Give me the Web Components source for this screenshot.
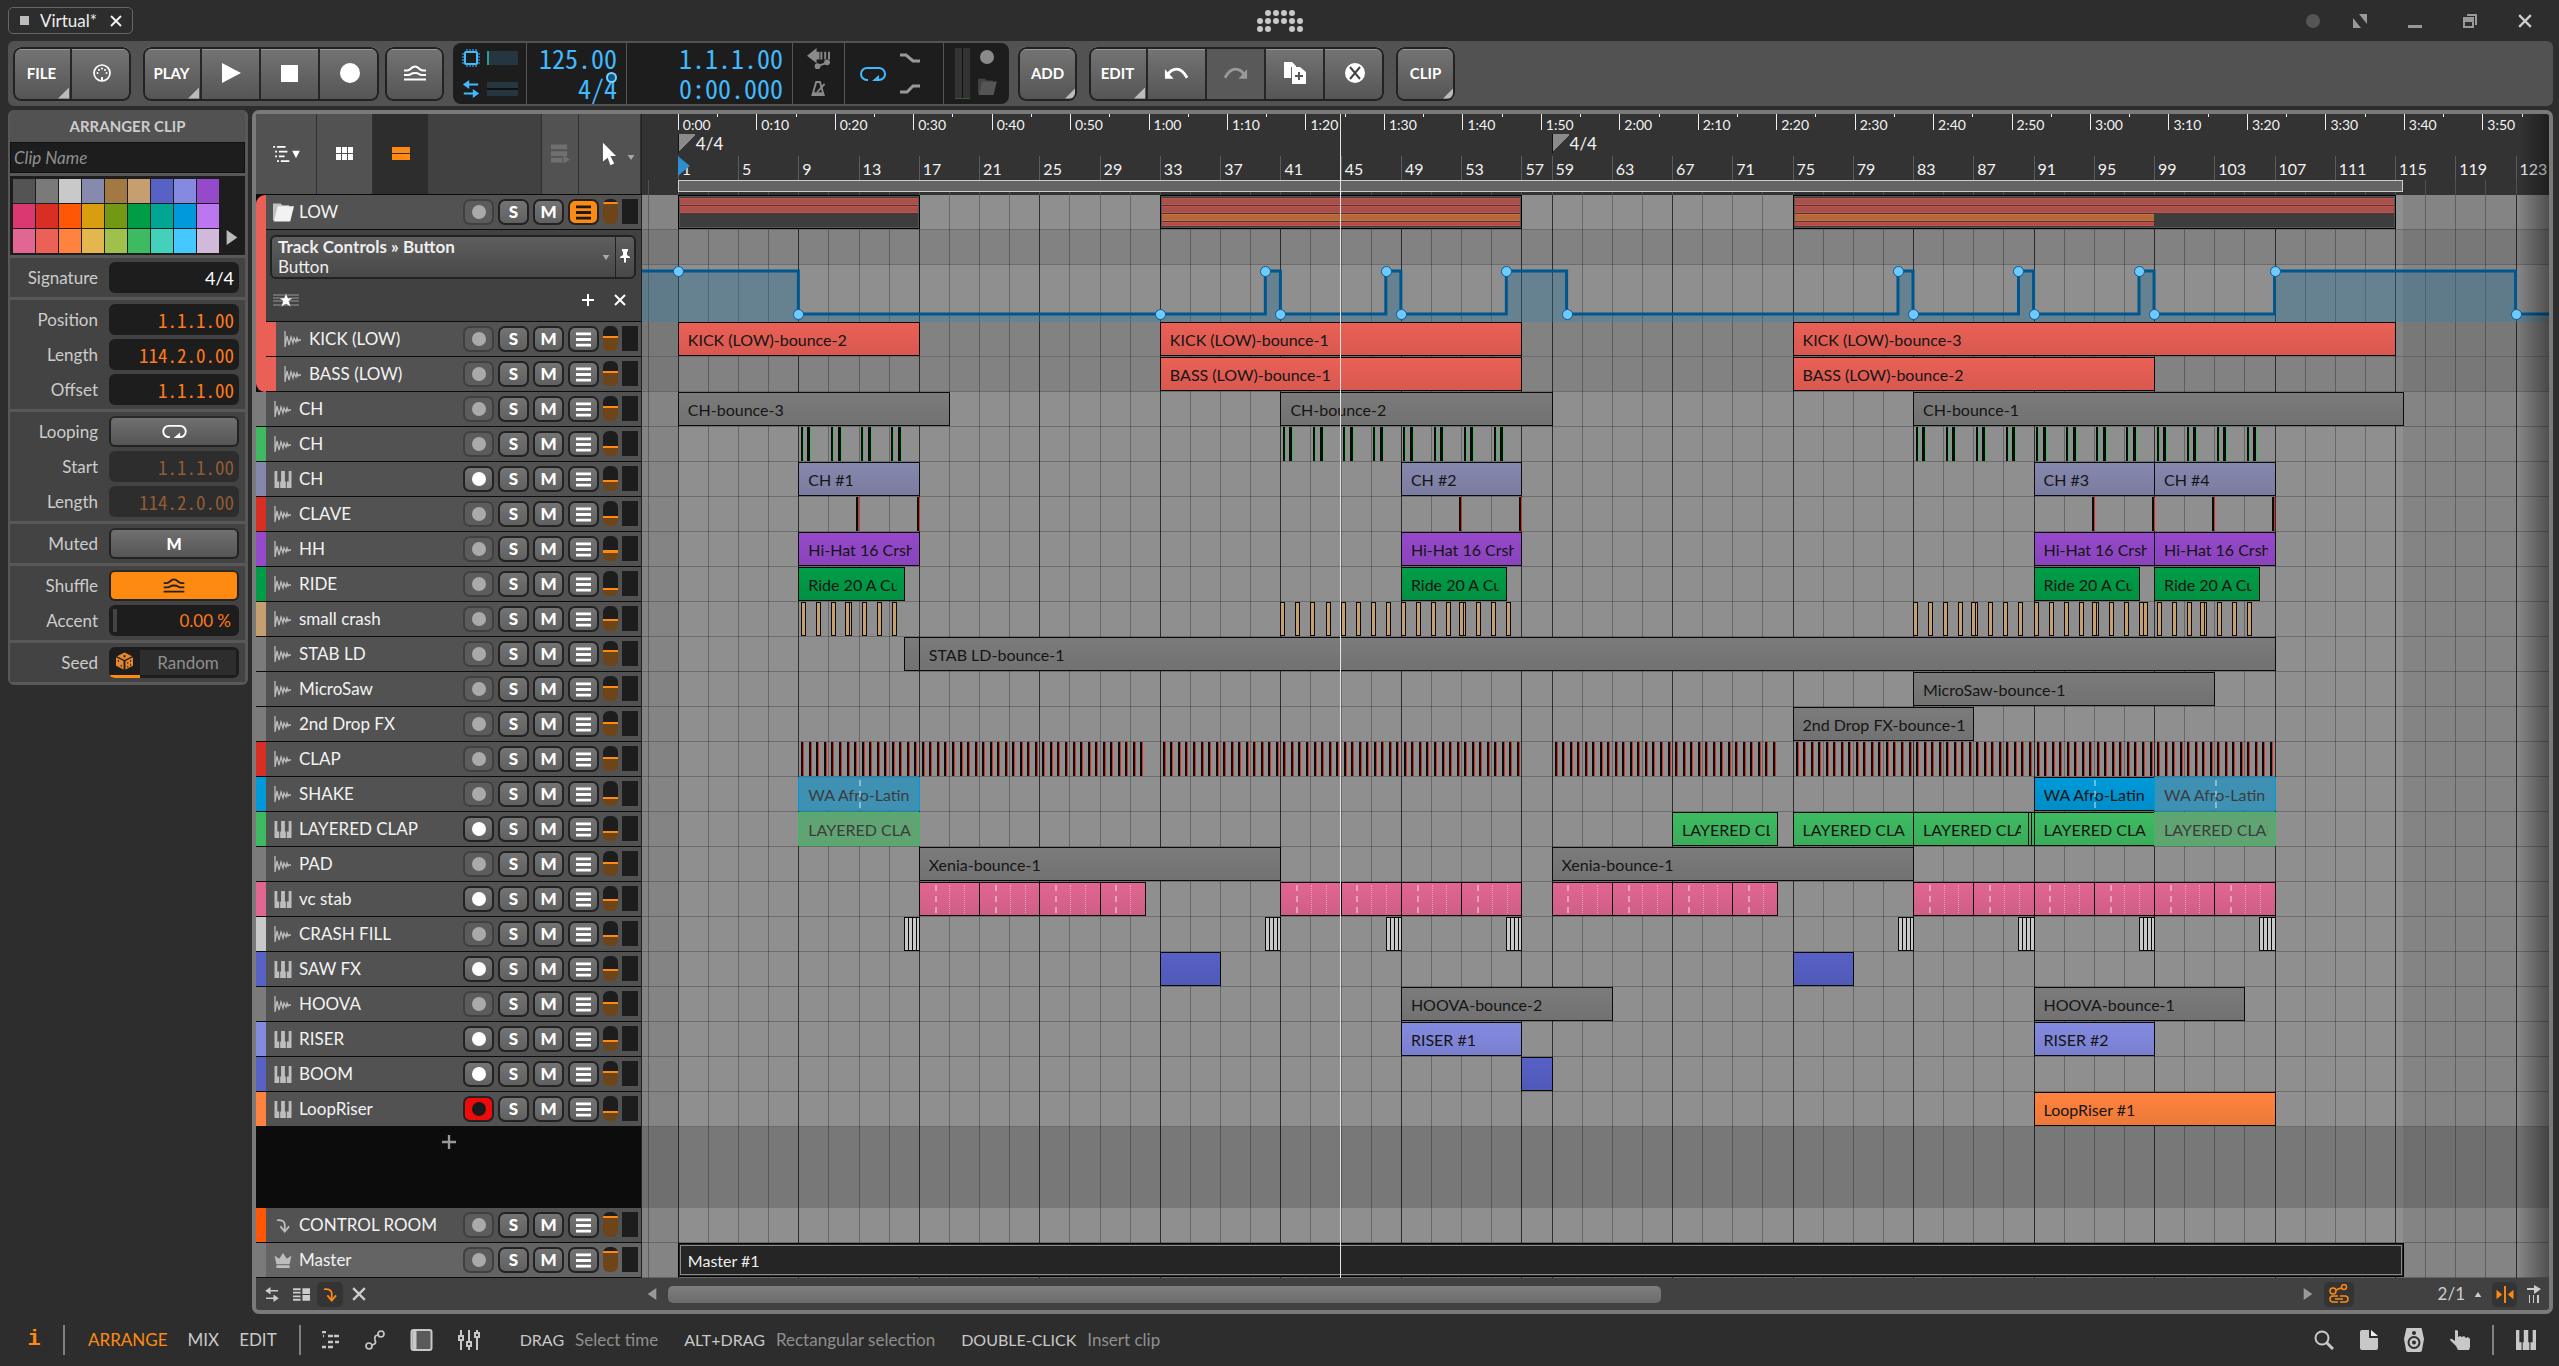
<!DOCTYPE html>
<html lang="en">
<head>
<meta charset="utf-8">
<title>Virtual* - Arranger</title>
<style>
  html, body {
    height: 100%;
  }

  body {
    margin: 0;
    background: #2d2d2d;
    color: #e6e6e6;
    font-family: Lato, "Liberation Sans", sans-serif;
    font-size: 17px;
    line-height: 20px;
    overflow: hidden;
    --mono: "Noto Sans Mono CJK JP", "DejaVu Sans Mono", "Liberation Mono", monospace;
    --orange: #ff8a12;
    --blue: #41baff;
  }
</style>
</head>
<body>
<daw-app></daw-app>

<script>
  const ICONS = {
    loop: ['0 0 26 16', '<path d="M8 14H7a6 6 0 0 1 0-12h12a6 6 0 0 1 0 12h-4" fill="none" stroke="currentColor" stroke-width="2"/><path d="M12 15l7-6v6z" fill="currentColor"/>'],
    midi: ['0 0 18 18', '<circle cx="9" cy="9" r="8" fill="none" stroke="currentColor" stroke-width="1.700"/><circle cx="4.500" cy="9" r="1" fill="currentColor"/><circle cx="6" cy="6" r="1" fill="currentColor"/><circle cx="9" cy="4.500" r="1" fill="currentColor"/><circle cx="12" cy="6" r="1" fill="currentColor"/><circle cx="13.500" cy="9" r="1" fill="currentColor"/><path d="M8 13h2v3H8z" fill="currentColor"/>'],
    play: ['0 0 20 20', '<path d="M1 0l19 10L1 20z" fill="currentColor"/>'],
    stop: ['0 0 18 18', '<path d="M0 0h18v18H0z" fill="currentColor"/>'],
    record: ['0 0 20 20', '<circle cx="10" cy="10" r="10" fill="currentColor"/>'],
    shuffle: ['0 0 24 16', '<path d="M1 14.500h22M1 10h4q2 0 3-1t4-1 4 1 3 1h4M1 5.500h3q2 0 4-2t4-2 4 2 4 2h3" fill="none" stroke="currentColor" stroke-width="2"/>'],
    undo: ['0 0 26 14', '<path d="M3 10Q7 3 13 3t11 9" fill="none" stroke="currentColor" stroke-width="3"/><path d="M1 3v10h9z" fill="currentColor"/>'],
    redo: ['0 0 26 14', '<path d="M23 10Q19 3 13 3T2 12" fill="none" stroke="currentColor" stroke-width="3"/><path d="M25 3v10h-9z" fill="currentColor"/>'],
    copy: ['0 0 22 22', '<path d="M0 0h8l4 4v1H7v11H0z" fill="currentColor"/><path d="M8 5h8l6 5v12H8z" fill="currentColor"/><path d="M15 10v8M11 14h8" stroke="#555" stroke-width="2"/>'],
    cancel: ['0 0 20 20', '<circle cx="10" cy="10" r="10" fill="currentColor"/><path d="M5 4l10 12M15 4L5 16" stroke="#444" stroke-width="2"/>'],
    chip: ['0 0 18 18', '<rect x="3" y="3" width="12" height="12" rx="1" fill="none" stroke="currentColor" stroke-width="2"/><path d="M5 0v3M8 0v3M11 0v3M14 0v3M5 15v3M8 15v3M11 15v3M14 15v3M0 5h3M0 8h3M0 11h3M0 14h3M15 5h3M15 8h3M15 11h3M15 14h3" stroke="currentColor"/>'],
    io: ['0 0 18 20', '<path d="M5 5h12M1 15h12" stroke="currentColor" stroke-width="2"/><path d="M0 5l7-5v10zM18 15l-7-5v10z" fill="currentColor"/>'],
    follow: ['0 0 24 22', '<path d="M0 8l10-8v4h3v8h-3v4zM14 4h2v8h-2zM18 4h2v8h-2zM22 4h2v8h-2z" fill="currentColor"/><path d="M11 19l11-4" stroke="currentColor" stroke-width="2"/><circle cx="11" cy="19" r="3" fill="currentColor"/><circle cx="21" cy="15" r="3" fill="currentColor"/>'],
    metronome: ['0 0 16 16', '<path d="M1 15L5 1h4l4 14z" fill="none" stroke="currentColor" stroke-width="2"/><path d="M1 12h12v4H1z" fill="currentColor"/><path d="M6 12l8-9" stroke="currentColor" stroke-width="2"/>'],
    fadeout: ['0 0 20 10', '<path d="M0 2h6l7 6h7" fill="none" stroke="currentColor" stroke-width="3"/>'],
    fadein: ['0 0 20 10', '<path d="M0 8h7l6-6h7" fill="none" stroke="currentColor" stroke-width="3"/>'],
    folder: ['0 0 22 20', '<path d="M0 19V1h8l2 2h7v2L4 19z" fill="currentColor" opacity=".700"/><path d="M5 4h17l-4 16H1z" fill="currentColor"/>'],
    wave: ['0 0 18 18', '<path d="M1 1v16l2-11 2 9 2-8 2 6 1-5 2 4 1-4 1 3 1-1h2" fill="none" stroke="currentColor" stroke-width="1.300"/>'],
    keys: ['0 0 18 18', '<path d="M0 0h3v11h2v7H0zM6 11h1V0h4v11h1v7H6zM15 0h3v18h-5v-7h2z" fill="currentColor"/>'],
    bend: ['0 0 16 16', '<path d="M1 2q9-1 9 5v6" fill="none" stroke="currentColor" stroke-width="2"/><path d="M5 9l5 6 5-6" fill="none" stroke="currentColor" stroke-width="2"/>'],
    crown: ['0 0 18 16', '<path d="M0 3l5 3 4-6 4 6 5-3-2 9H2zM2 13h14v3H2z" fill="currentColor"/>'],
    list: ['0 0 16 16', '<path d="M0 2h16M0 8h16M0 14h16" stroke="currentColor" stroke-width="3"/>'],
    outline: ['0 0 28 20', '<path d="M0 2h2M4 2h9M2 7h2M6 7h9M2 12h2M6 12h6M4 17h2M8 17h9" stroke="currentColor" stroke-width="2"/><path d="M20 6h8l-4 8z" fill="currentColor"/>'],
    grid: ['0 0 18 14', '<path d="M0 0h5v6H0zM6 0h5v6H6zM12 0h5v6h-5zM0 7h5v6H0zM6 7h5v6H6zM12 7h5v6h-5z" fill="currentColor"/>'],
    rows: ['0 0 18 14', '<path d="M0 0h18v6H0zM0 7h18v6H0z" fill="currentColor"/>'],
    lanes: ['0 0 20 20', '<path d="M0 0h17v5H0zM0 7h17v5H0zM0 14h12v5H0zM13 11l7 5-7 4z" fill="currentColor"/>'],
    cursor: ['0 0 16 24', '<path d="M1 0l14 14H9l4 8-4 2-3-8-5 4z" fill="currentColor"/>'],
    down: ['0 0 8 6', '<path d="M0 0h8L4 6z" fill="currentColor"/>'],
    up: ['0 0 8 6', '<path d="M0 6h8L4 0z" fill="currentColor"/>'],
    right: ['0 0 10 14', '<path d="M0 0l10 7-10 7z" fill="currentColor"/>'],
    left: ['0 0 10 14', '<path d="M10 0L0 7l10 7z" fill="currentColor"/>'],
    pin: ['0 0 10 14', '<path d="M2 0h6v2L7 3v3l3 2v1H6v4l-1 1-1-1V9H0V8l3-2V3L2 2z" fill="currentColor"/>'],
    star: ['0 0 26 14', '<path d="M0 2h26M0 5h26M0 8h26M0 12h26" stroke="#999"/><path d="M13 0l2 5h5l-4 3 2 6-5-3-5 3 2-6-4-3h5z" fill="currentColor" stroke="#414141" stroke-width=".500"/>'],
    plus: ['0 0 12 12', '<path d="M6 0v12M0 6h12" stroke="currentColor" stroke-width="2"/>'],
    close: ['0 0 12 12', '<path d="M1 1l10 10M11 1L1 11" stroke="currentColor" stroke-width="2"/>'],
    dice: ['0 0 18 18', '<path d="M9 0l8 4-8 4-8-4zM0 5l8 4v9l-8-4zM18 5l-8 4v9l8-4z" fill="currentColor"/><path d="M8 3h2v2H8zM2 8h1v2H2zM5 13h1v2H5zM12 10h1v2h-1zM15 8h1v2h-1zM12 14h1v2h-1zM15 12h1v2h-1z" fill="#1d1d1d"/>'],
    logo: ['0 0 46 22', [[1, 4], [0, 5], [0, 5]].map(([a, b], row) => {
      let dots = '';
      for (let col = a; col <= b; col++) {
        if (row === 2 && (col === 2 || col === 3)) continue;
        dots += `<circle cx="${3 + col * 8}" cy="${3 + row * 8}" r="3" fill="currentColor"/>`;
      }
      return dots;
    }).join('')],
    expand: ['0 0 14 14', '<path d="M0 4v10h8zM6 0h8v10z" fill="currentColor"/>'],
    minimize: ['0 0 14 14', '<path d="M0 11h14v3H0z" fill="currentColor"/>'],
    restore: ['0 0 14 14', '<path d="M4 0h10v11h-2V2H4z" fill="currentColor"/><path d="M0 3h11v11H0zM2 8v4h7V8z" fill="currentColor" fill-rule="evenodd"/>'],
    linked: ['0 0 20 20', '<circle cx="4" cy="7" r="3" fill="none" stroke="currentColor" stroke-width="1.500"/><circle cx="15" cy="3" r="2.500" fill="none" stroke="currentColor" stroke-width="1.500"/><path d="M7 6l5-2M9 18H4a3 3 0 0 1 0-6h5M11 12h5a3 3 0 0 1 0 6h-5M6 15h8" fill="none" stroke="currentColor" stroke-width="1.500"/>'],
    snap: ['0 0 18 18', '<path d="M9 0v18" stroke="currentColor" stroke-width="2"/><path d="M0 4l6 5-6 5zM18 4l-6 5 6 5z" fill="currentColor"/>'],
    step: ['0 0 14 18', '<path d="M0 4h8" stroke="currentColor" stroke-width="2"/><path d="M7 0l7 4-7 5zM10 10h2v8h-2zM6 10h1v8H6zM2 10h1v8H2z" fill="currentColor"/>'],
    rowset: ['0 0 18 13', '<path d="M0 1h8M0 4.500h8M0 8.500h8M0 12h8" stroke="currentColor" stroke-width="2"/><path d="M10 0h8v6h-8zM10 7h8v6h-8z" fill="currentColor"/>'],
    notes: ['0 0 18 18', '<path d="M0 1h4M0 16h4M6 16h5M6 5h5M12 5h5M6 11h5M13 11h4M1 5h1" stroke="currentColor" stroke-width="2.500"/>'],
    automation: ['0 0 20 20', '<circle cx="4" cy="16" r="3" fill="none" stroke="currentColor" stroke-width="1.700"/><circle cx="16" cy="4" r="3" fill="none" stroke="currentColor" stroke-width="1.700"/><path d="M7 15q5-1 3-5-1-5 3-5" fill="none" stroke="currentColor" stroke-width="1.700"/>'],
    panel: ['0 0 22 22', '<rect x="1" y="1" width="20" height="20" rx="2" fill="#5a5a5a" stroke="currentColor" stroke-width="2"/><path d="M2 2h4v18H2z" fill="currentColor"/>'],
    mixer: ['0 0 22 20', '<path d="M3 0v20M11 0v20M19 0v20" stroke="currentColor" stroke-width="2"/><g fill="#2d2d2d" stroke="currentColor" stroke-width="2"><rect x="1" y="6" width="4" height="4"/><rect x="9" y="12" width="4" height="4"/><rect x="17" y="3" width="4" height="4"/></g>'],
    search: ['0 0 20 20', '<circle cx="8" cy="8" r="6.500" fill="none" stroke="currentColor" stroke-width="2"/><path d="M12 12l7 7" stroke="currentColor" stroke-width="3"/>'],
    page: ['0 0 18 20', '<path d="M2 0h7v8h9v10a2 2 0 0 1-2 2H2a2 2 0 0 1-2-2V2a2 2 0 0 1 2-2z" fill="currentColor"/><path d="M11 0l7 6h-7z" fill="#eee"/>'],
    speaker: ['0 0 20 24', '<path d="M3 0h14q1 0 1 2l2 9-2 11q0 2-2 2H4q-2 0-2-2L0 11l2-9q0-2 1-2z" fill="currentColor"/><circle cx="10" cy="14.500" r="5.500" fill="none" stroke="#2d2d2d" stroke-width="2"/><circle cx="10" cy="14.500" r="2" fill="#2d2d2d"/><circle cx="10" cy="5" r="2" fill="#2d2d2d"/>'],
    hand: ['0 0 20 20', '<path d="M5 1q0-1 1-1t2 1v6l2-1 2 1 2-1 2 2 2-1 2 2v8l-1 3H8l-2-4-6-6q0-2 2-1l3 2z" fill="currentColor"/>']
  };

  // Bars are laid out as a share of the visible range so the timeline scales with the window.
  const LEAD_IN = 2.38;
  const VISIBLE_BARS = 126.6;
  const SONG_END = 115.5;
  const SECONDS_PER_BAR = 1.92;

  const span = (bars) => `${(bars / VISIBLE_BARS * 100).toFixed(3)}%`;
  const at = (bar) => span(bar - 1 + LEAD_IN);

  function range(from, to, step = 1) {
    const out = [];
    for (let v = from; v <= to + 0.001; v += step) out.push(v);
    return out;
  }

  const icon = (name, w, h) => `<daw-icon name="${name}" w="${w}" h="${h}"></daw-icon>`;

  class DawElement extends HTMLElement {
    constructor() {
      super();
      this.attachShadow({ mode: 'open' });
    }

    connectedCallback() {
      this.shadowRoot.innerHTML = `<style>${this.styles()}</style>${this.template()}`;
    }

    styles() {
      return ':host { display: block; }';
    }

    template() {
      return '<slot></slot>';
    }
  }

  class DawIcon extends DawElement {
    styles() {
      return ':host { display: inline-flex; flex: none; } svg { display: block; }';
    }

    template() {
      const [box, body] = ICONS[this.getAttribute('name')];
      return `<svg width="${this.getAttribute('w')}" height="${this.getAttribute('h')}" viewBox="${box}" aria-hidden="true">${body}</svg>`;
    }
  }

  class TitleBar extends DawElement {
    styles() {
      return `
        :host { display: grid; grid-template-columns: 1fr auto 1fr; align-items: center; height: 41px; color: #c8c8c8; }
        .tab { display: flex; align-items: center; gap: 11px; width: 125px; height: 27px; margin-left: 8px; box-sizing: border-box; padding-left: 11px; border: 1px solid #666; border-radius: 5px; color: #eee; }
        .tab i { width: 9px; height: 9px; background: #bbb; }
        .tab span { flex: 1; }
        button { border: 0; padding: 0; background: none; color: inherit; display: flex; }
        .tab button { margin-right: 10px; }
        .window { display: flex; justify-content: flex-end; align-items: center; gap: 41px; padding-right: 27px; color: #999; }
        .window .dim { color: #555; margin-right: -8px; }
        .window .x { color: #ccc; }
      `;
    }

    template() {
      return `
        <div class="tab"><i></i><span>Virtual*</span><button aria-label="Close project">${icon('close', 12, 12)}</button></div>
        ${icon('logo', 46, 22)}
        <div class="window">
          <button class="dim" aria-label="Status">${icon('record', 14, 14)}</button>
          <button aria-label="Full screen">${icon('expand', 14, 14)}</button>
          <button aria-label="Minimize">${icon('minimize', 14, 14)}</button>
          <button aria-label="Restore">${icon('restore', 14, 14)}</button>
          <button class="x" aria-label="Close">${icon('close', 14, 14)}</button>
        </div>
      `;
    }
  }

  class ToolGroup extends DawElement {
    styles() {
      return `
        :host { position: relative; display: flex; height: 54px; border-radius: 8px; overflow: hidden; }
        :host::after { content: ""; position: absolute; inset: 0; border: 2px solid #222; border-radius: 8px; pointer-events: none; }
        ::slotted(tool-button) { box-sizing: border-box; }
        ::slotted(tool-button:not(:last-child)) { border-right: 2px solid #262626; }
      `;
    }
  }

  class ToolButton extends DawElement {
    styles() {
      return `
        :host { display: block; width: 59px; }
        button { position: relative; display: flex; align-items: center; justify-content: center; width: 100%; height: 100%; border: 0; border-top: 3px solid #999; padding: 0 0 4px; background: linear-gradient(#737373, #545454); color: #fff; font: 700 15px/20px Lato, "Liberation Sans", sans-serif; }
        :host([off]) button { background: #595959; color: #999; border-top-color: #595959; }
        :host([menu]) button::after { content: ""; position: absolute; right: 1px; bottom: 2px; width: 11px; height: 11px; background: #bbb; clip-path: polygon(100% 0, 100% 100%, 0 100%); }
      `;
    }

    template() {
      return `<button ${this.hasAttribute('off') ? 'disabled' : ''} aria-label="${this.getAttribute('label') || this.textContent.trim()}"><slot></slot></button>`;
    }
  }

  class TransportDisplay extends DawElement {
    styles() {
      return `
        :host { display: grid; grid-template-columns: 74px 100px 166px 52px 99px 65px; width: 556px; height: 61px; background: #1d1d1d; border-radius: 8px; }
        section { display: grid; grid-template-rows: 1fr 1fr; align-items: center; border-right: 1px solid #555; box-sizing: border-box; }
        section:last-child { border: 0; }
        .stat { color: var(--blue); padding-left: 9px; }
        .stat div { display: flex; align-items: center; gap: 7px; }
        .load { width: 31px; height: 14px; background: #263640; border-left: 2px solid #2a9a9a; box-sizing: border-box; }
        .io { width: 31px; height: 14px; background: linear-gradient(#263640 6px, #111 6px, #111 8px, #263640 8px); }
        .num { color: var(--blue); font: 26px/26px var(--mono); text-align: right; padding: 0 9px 1px 0; }
        .sig { position: relative; }
        .sig i { position: absolute; right: 0; top: -3px; width: 7px; height: 7px; border: 2px solid #7ad0ff; border-radius: 50%; background: #0c5a8a; }
        .mid { justify-items: center; color: #8a8a8a; }
        .loop { grid-template-columns: 55px 1fr; color: #999; }
        .loop daw-icon:first-child { grid-row: 1 / 3; color: var(--blue); justify-self: center; }
        .meter { grid-template-columns: 23px 1fr; color: #8a8a8a; padding-left: 11px; }
        .meter div { grid-row: 1 / 3; height: 50px; width: 15px; background: linear-gradient(90deg, #333 7px, #111 7px, #111 8px, #333 8px); border-bottom: 1px solid #2f5f2f; }
        .meter .dot { margin-left: 2px; }
        .meter .dim { color: #555; }
      `;
    }

    template() {
      return `
        <section class="stat"><div>${icon('chip', 18, 18)}<span class="load"></span></div><div>${icon('io', 18, 18)}<span class="io"></span></div></section>
        <section class="num"><output>125.00</output><output class="sig">4/4<i></i></output></section>
        <section class="num"><output>1.1.1.00</output><output>0:00.000</output></section>
        <section class="mid">${icon('follow', 23, 21)}${icon('metronome', 16, 15)}</section>
        <section class="loop">${icon('loop', 26, 16)}${icon('fadeout', 20, 10)}${icon('fadein', 20, 10)}</section>
        <section class="meter"><div></div><span class="dot">${icon('record', 14, 14)}</span><span class="dim">${icon('folder', 19, 17)}</span></section>
      `;
    }
  }

  class TransportBar extends DawElement {
    styles() {
      return `
        :host { display: flex; align-items: center; height: 65px; margin: 0 6px 0 8px; padding-left: 5px; box-sizing: border-box; background: #525252; border-radius: 6px; }
        .a { margin-right: 12px; }
        .b { margin-right: 6px; }
        .c { margin-right: 9px; }
      `;
    }

    template() {
      return `
        <tool-group class="a"><tool-button menu>FILE</tool-button><tool-button label="Controllers">${icon('midi', 18, 18)}</tool-button></tool-group>
        <tool-group class="b"><tool-button menu>PLAY</tool-button><tool-button label="Play">${icon('play', 20, 20)}</tool-button><tool-button label="Stop">${icon('stop', 17, 17)}</tool-button><tool-button label="Record">${icon('record', 20, 20)}</tool-button></tool-group>
        <tool-group class="c"><tool-button label="Groove">${icon('shuffle', 24, 16)}</tool-button></tool-group>
        <transport-display class="c"></transport-display>
        <tool-group class="a"><tool-button menu>ADD</tool-button></tool-group>
        <tool-group class="a"><tool-button menu>EDIT</tool-button><tool-button label="Undo">${icon('undo', 25, 14)}</tool-button><tool-button off label="Redo">${icon('redo', 25, 14)}</tool-button><tool-button label="Duplicate">${icon('copy', 22, 22)}</tool-button><tool-button label="Delete">${icon('cancel', 20, 20)}</tool-button></tool-group>
        <tool-group><tool-button menu>CLIP</tool-button></tool-group>
      `;
    }
  }

  class InspectorField extends DawElement {
    styles() {
      return `
        :host { display: grid; grid-template-columns: 88px 130px; gap: 11px; align-items: center; height: 31px; }
        label { text-align: right; color: #ccc; }
        input, button { width: 130px; height: 31px; box-sizing: border-box; border: 0; border-radius: 6px; background: #1d1d1d; }
        input { padding: 0 5px; text-align: right; color: #fff; font: 18px/20px Lato, "Liberation Sans", sans-serif; }
        input.time { font: 19px/20px var(--mono); color: #ff7a1a; }
        input.accent { color: #ff7a1a; padding-right: 8px; font-size: 17px; background: linear-gradient(90deg, transparent 4px, #444 4px, #444 8px, transparent 8px) 0 50% / 100% 23px no-repeat #1d1d1d; }
        input:disabled { background: #2d2d2d; color: #8f5c35; }
        button { display: flex; align-items: center; justify-content: center; padding: 0; border: 2px solid #222; border-top-color: #2a2a2a; background: linear-gradient(#707070, #555); color: #fff; font: 900 16px/20px Lato, "Liberation Sans", sans-serif; }
        button.on { background: var(--orange); color: #222; }
        .seed { display: flex; width: 130px; height: 31px; border-radius: 6px; background: #1d1d1d; overflow: hidden; }
        .seed button { width: 31px; border: 0; border-bottom: 3px solid var(--orange); border-radius: 0; background: none; color: #e8862b; }
        .seed input { width: 96px; height: 25px; margin-top: 3px; border-radius: 0; background: #2d2d2d; color: #8f8f8f; text-align: center; font-size: 17px; }
      `;
    }

    template() {
      const type = this.getAttribute('type');
      const value = this.getAttribute('value');
      const label = this.getAttribute('label');
      let control = `<input id="f" class="${type || ''}" value="${value}" ${this.hasAttribute('off') ? 'disabled' : ''}>`;
      if (type === 'button') {
        control = `<button id="f" class="${this.hasAttribute('on') ? 'on' : ''}" aria-label="${label}"><slot></slot></button>`;
      } else if (type === 'seed') {
        control = `<div class="seed"><button aria-label="Randomize">${icon('dice', 17, 18)}</button><input id="f" value="${value}"></div>`;
      }
      return `<label for="f">${label}</label>${control}`;
    }
  }

  class ClipInspector extends DawElement {
    styles() {
      const colors = [
        '#545454', '#7a7a7a', '#c9c9c9', '#868aad', '#a37943', '#c69f70', '#5761c6', '#848ae0', '#9549cb',
        '#d93871', '#d92e24', '#ff5706', '#d99d10', '#739914', '#009d47', '#00a694', '#0099d9', '#bc76f0',
        '#e16691', '#ec6157', '#ff833e', '#e4b74e', '#a0c04c', '#3ebb62', '#43d2b9', '#44c8ff', '#d0b9da'
      ];
      return `
        :host { display: flex; flex-direction: column; gap: 3px; align-self: start; width: 240px; box-sizing: border-box; padding: 0 3px 3px 2px; background: #585858; border-radius: 6px; overflow: hidden; }
        h2 { margin: 0 0 -3px; height: 32px; font: 700 15px/33px Lato, "Liberation Sans", sans-serif; color: #ccc; text-align: center; background: #525252; }
        .name { height: 31px; box-sizing: border-box; border: 1px solid #111; padding: 0 3px; background: #1d1d1d; color: #ddd; font: italic 17px/20px Lato, "Liberation Sans", sans-serif; }
        .name::placeholder { color: #8f8f8f; opacity: 1; }
        .palette { display: flex; align-items: end; background: #1d1d1d; padding: 3px 3px 2px; }
        .swatches { display: grid; grid-template-columns: repeat(9, 22px); gap: 1px; }
        .swatches button { height: 24px; border: 0; padding: 0; }
        .more { border: 0; padding: 0; margin: 0 0 5px 7px; background: none; color: #bbb; }
        .group { display: flex; flex-direction: column; gap: 4px; padding: 4px 0; background: #434343; }
        ${colors.map((c, i) => `.swatches button:nth-child(${i + 1}) { background: ${c}; }`).join('')}
      `;
    }

    template() {
      return `
        <h2>ARRANGER CLIP</h2>
        <input class="name" placeholder="Clip Name" aria-label="Clip name">
        <div class="palette">
          <div class="swatches">${range(1, 27).map((i) => `<button aria-label="Color ${i}"></button>`).join('')}</div>
          <button class="more" aria-label="More colors">${icon('right', 12, 15)}</button>
        </div>
        <div class="group"><inspector-field label="Signature" value="4/4"></inspector-field></div>
        <div class="group">
          <inspector-field label="Position" type="time" value="1.1.1.00"></inspector-field>
          <inspector-field label="Length" type="time" value="114.2.0.00"></inspector-field>
          <inspector-field label="Offset" type="time" value="1.1.1.00"></inspector-field>
        </div>
        <div class="group">
          <inspector-field label="Looping" type="button">${icon('loop', 25, 15)}</inspector-field>
          <inspector-field label="Start" type="time" value="1.1.1.00" off></inspector-field>
          <inspector-field label="Length" type="time" value="114.2.0.00" off></inspector-field>
        </div>
        <div class="group"><inspector-field label="Muted" type="button">M</inspector-field></div>
        <div class="group">
          <inspector-field label="Shuffle" type="button" on>${icon('shuffle', 24, 15)}</inspector-field>
          <inspector-field label="Accent" type="accent" value="0.00 %"></inspector-field>
        </div>
        <div class="group"><inspector-field label="Seed" type="seed" value="Random"></inspector-field></div>
      `;
    }
  }

  class TrackHeader extends DawElement {
    styles() {
      return `
        :host { display: flex; height: 35px; box-sizing: border-box; border-bottom: 1px solid #0c0c0c; background: #525252; }
        .strip { width: 10px; background: ${this.getAttribute('color')}; }
        .type { display: flex; align-items: center; justify-content: center; width: 18px; margin: 0 7px 0 8px; color: #bdbdbd; }
        .type.folder { color: #f2f2f2; }
        .name { flex: 1; color: #f2f2f2; line-height: 34px; white-space: nowrap; }
        .tools { display: flex; gap: 4px; padding: 4px 3px 0 0; }
        .tools button { display: flex; align-items: center; justify-content: center; width: 31px; height: 26px; padding: 0; border: 2px solid #222; border-radius: 7px; background: linear-gradient(#747474, #606060); color: #fff; font: 900 17px/20px Lato, "Liberation Sans", sans-serif; }
        .tools button.idle { border-color: #404040; background: #5c5c5c; color: #aaa; }
        .tools button.armed { background: #f00a0a; color: #1a1a1a; }
        .tools button.lit { background: var(--orange); color: #1a1a1a; }
        input { appearance: none; width: 15px; height: 25px; margin: 0; border-radius: 6px; background: linear-gradient(#1d1d1d calc(var(--vol) - 2px), var(--orange) calc(var(--vol) - 2px), var(--orange) var(--vol), #6e4518 var(--vol)); }
        input::-webkit-slider-thumb { appearance: none; width: 0; height: 0; }
        .meter { width: 16px; height: 25px; background: #1d1d1d; }
        :host([main]) { background: #646464; }
      `;
    }

    template() {
      const type = this.getAttribute('type');
      const rec = this.getAttribute('rec') || 'idle';
      const name = this.getAttribute('name');
      const vol = this.getAttribute('vol');
      const size = { folder: [21, 20], wave: [18, 18], keys: [18, 17], bend: [14, 15], crown: [18, 15] }[type];
      return `
        ${this.hasAttribute('color') ? '<div class="strip"></div>' : ''}
        <div class="type ${type}">${icon(type, ...size)}</div>
        <div class="name">${name}</div>
        <div class="tools">
          <button class="${rec}" aria-label="Record arm ${name}">${icon('record', 14, 14)}</button>
          <button>S</button>
          <button>M</button>
          <button class="${this.hasAttribute('lit') ? 'lit' : ''}" aria-label="Automation ${name}">${icon('list', 15, 15)}</button>
          <input type="range" min="0" max="100" value="${100 - vol}" aria-label="Volume ${name}" style="--vol: ${vol}%">
          <div class="meter"></div>
        </div>
      `;
    }
  }

  class AutomationHeader extends DawElement {
    styles() {
      return `
        :host { display: flex; flex-direction: column; justify-content: space-between; height: 92px; box-sizing: border-box; padding: 5px 5px 11px 4px; border-bottom: 1px solid #0c0c0c; background: #414141; color: #fff; }
        .pick { display: flex; height: 44px; box-sizing: border-box; border: 2px solid #222; border-radius: 6px; background: linear-gradient(#5e5e5e, #484848); overflow: hidden; }
        button { border: 0; padding: 0; background: none; color: inherit; font: inherit; }
        .param { flex: 1; display: flex; align-items: center; padding: 0 5px 0 6px; text-align: left; color: #eee; }
        .param span { flex: 1; font-size: 17px; line-height: 20px; }
        .param b { display: block; }
        .param daw-icon { color: #aaa; }
        .pin { width: 19px; border-left: 1px solid #222; }
        .row { display: flex; align-items: center; padding: 0 10px 0 3px; }
        .row button:first-of-type { margin-left: auto; margin-right: 20px; }
      `;
    }

    template() {
      return `
        <div class="pick">
          <button class="param"><span><b>Track Controls » Button</b>Button</span>${icon('down', 8, 5)}</button>
          <button class="pin" aria-label="Pin lane">${icon('pin', 10, 14)}</button>
        </div>
        <div class="row">${icon('star', 26, 14)}<button aria-label="Add lane">${icon('plus', 12, 12)}</button><button aria-label="Remove lane">${icon('close', 12, 12)}</button></div>
      `;
    }
  }

  class TrackGroup extends DawElement {
    styles() {
      return `
        :host { display: grid; grid-template-columns: 10px 1fr; background: #0c0c0c; }
        .strip { background: #ea6056; border-radius: 9px 0 0 9px; }
      `;
    }

    template() {
      return '<div class="strip"></div><div><slot></slot></div>';
    }
  }

  class TimeRuler extends DawElement {
    styles() {
      return `
        :host { display: grid; grid-template-rows: 20px 20px 26px 15px; height: 81px; background: #333; color: #f2f2f2; overflow: hidden; }
        .row { position: relative; }
        .row > * { position: absolute; top: 0; }
        .sec { height: 16px; border-left: 1px solid #eee; padding-left: 4px; font-size: 14px; line-height: 22px; }
        .half { height: 3px; width: 1px; background: #eee; }
        .sig { font-size: 17px; line-height: 20px; padding-left: 18px; }
        .sig::before { content: ""; position: absolute; left: 0; top: 0; width: 17px; height: 19px; background: linear-gradient(135deg, #8a8a8a 50%, transparent 50%); border-left: 1px solid #111; box-sizing: border-box; }
        .bar { height: 26px; border-left: 1px solid #5c5c5c; padding-left: 3px; font-size: 16px; line-height: 26px; top: 2px; }
        .start { top: 2px; width: 12px; height: 20px; background: #2e8fd0; clip-path: polygon(0 0, 100% 50%, 0 100%); }
        .minor { width: 1px; height: 15px; background: #505050; }
        .region { height: 12px; box-sizing: border-box; border: 1px solid #ccc; background: #646464; }
      `;
    }

    template() {
      const seconds = range(0, 230, 10).map((s) => {
        const text = `${Math.floor(s / 60)}:${String(s % 60).padStart(2, '0')}`;
        return `<span class="sec" style="left: ${at(1 + s / SECONDS_PER_BAR)}">${text}</span><i class="half" style="left: ${at(1 + (s + 5) / SECONDS_PER_BAR)}"></i>`;
      });
      const bars = [...range(1, 57, 4), ...range(59, 123, 4)];
      return `
        <div class="row">${seconds.join('')}</div>
        <div class="row">${[1, 59].map((b) => `<span class="sig" style="left: ${at(b)}">4/4</span>`).join('')}</div>
        <div class="row">${bars.map((b) => `<span class="bar" style="left: ${at(b)}">${b}</span>`).join('')}<i class="start" style="left: ${at(1)}"></i></div>
        <div class="row">${range(-1, 123, 2).map((b) => `<i class="minor" style="left: ${at(b)}"></i>`).join('')}<div class="region" style="left: ${at(1)}; width: ${span(SONG_END - 1)}"></div></div>
      `;
    }
  }

  class ArrangerClip extends DawElement {
    styles() {
      return `
        :host { position: absolute; z-index: 2; top: 0; height: 34px; box-sizing: border-box; border: 1px solid #0a0a0a; background: linear-gradient(transparent, rgba(0, 0, 0, .08)) var(--color); color: #151515; font-size: 16px; }
        .label { height: 32px; box-sizing: border-box; padding-top: 4px; margin: 0 7px 0 9px; line-height: 26px; overflow: hidden; white-space: nowrap; }
        :host([muted]) { border-color: var(--color); background: color-mix(in srgb, var(--color) 54%, #888); color: #3c3c3c; }
        :host([master]) { border: 1px solid #000; outline: 1px solid #8a8a8a; outline-offset: -3px; background: #252525; color: #eee; }
        :host([folder]) { border: 1px solid #000; outline: 1px solid #555; outline-offset: -2px; background: #3d3d3d; padding-top: 2px; }
        .part { height: 7px; margin: 0 1px 1px; box-sizing: border-box; border: solid #cc5048; border-width: 1px 0; background: #a8504b; }
        .part.alt { border-color: #cf6e38; background: #b3693c; }
        .part.low { height: 4px; }
        .part.short { margin-right: 40%; }
        .mark { position: absolute; top: 2px; bottom: 2px; border-left: 2px dashed rgba(255, 255, 255, .4); }
        .mark.dot { border-left: 1px dotted rgba(255, 255, 255, .4); }
        :host([stripes]) { background: repeating-linear-gradient(90deg, #c9c9c9 0 3px, #0a0a0a 3px 4px); }
      `;
    }

    template() {
      if (this.hasAttribute('folder')) {
        const parts = this.getAttribute('folder');
        const cut = parts === 'short' ? 'short' : '';
        return `<div class="part"></div><div class="part"></div>${parts === 'half' ? '' : `<div class="part alt ${cut}"></div><div class="part low ${cut}"></div>`}`;
      }
      const marks = (this.getAttribute('marks') || '').split(' ').filter(Boolean)
        .map((m, i) => `<i class="mark ${i ? 'dot' : ''}" style="left: ${m}%"></i>`).join('');
      return marks + `<div class="label"><slot></slot></div>`;
    }
  }

  class ArrangerLane extends DawElement {
    styles() {
      return `
        :host { display: block; position: relative; height: 35px; box-sizing: border-box; border-bottom: 1px solid #6d6d6d; background: #8f8f8f; }
        :host([dark]) { background: #828282; }
        .hit { position: absolute; z-index: 2; top: 0; height: 34px; width: 3px; box-sizing: border-box; border-left: 2px solid #0a0a0a; background: var(--color); }
        .hit.wide { width: 4px; border-left-width: 3px; }
        .hit.box { width: 5px; border: 1px solid #0a0a0a; }
      `;
    }

    template() {
      const track = this.track;
      const clips = (track.clips || []).map(([from, to, label = '', extra = '']) =>
        `<arranger-clip ${extra} style="left: ${at(from)}; width: calc(${span(to - from)} + 1px); --color: ${track.color}">${label}</arranger-clip>`);
      const hits = (track.hits || []).map(([bar, kind = '']) =>
        `<i class="hit ${kind}" style="left: ${at(bar)}; --color: ${track.color}"></i>`);
      return clips.join('') + hits.join('');
    }
  }

  class AutomationLane extends DawElement {
    styles() {
      return `
        :host { display: block; height: 92px; }
        .gap { height: 34px; border-bottom: 1px solid #6d6d6d; background: #828282; }
        .curve { position: relative; height: 57px; background: #8f8f8f; }
        svg { position: absolute; z-index: 2; width: 100%; height: 100%; }
        .point { position: absolute; z-index: 3; width: 9px; height: 9px; margin: -5px 0 0 -5px; border: 1px solid #0a5a94; border-radius: 50%; background: #6fcaff; }
      `;
    }

    template() {
      const hi = 6;
      const lo = 49;
      const points = [[1, hi], [9, lo], [33, lo], [40, hi], [41, lo], [48, hi], [49, lo], [56, hi], [60, lo], [82, hi], [83, lo], [90, hi], [91, lo], [98, hi], [99, lo], [107, hi], [123, lo]];
      let path = `M0 ${hi}`;
      points.forEach(([bar, y]) => {
        path += `H${bar - 1 + LEAD_IN}V${y}`;
      });
      path += `H${VISIBLE_BARS}`;
      return `
        <div class="gap"></div>
        <div class="curve">
          <svg viewBox="0 0 ${VISIBLE_BARS} 57" preserveAspectRatio="none">
            <path d="${path}V57H0z" fill="rgba(40, 110, 145, .4)"/>
            <path d="${path}" fill="none" stroke="#00568f" stroke-width="3" vector-effect="non-scaling-stroke"/>
          </svg>
          ${points.map(([bar, y]) => `<i class="point" style="left: ${at(bar)}; top: ${y}px"></i>`).join('')}
        </div>
      `;
    }
  }

  const RED = '#ea6056';
  const GREY = '#7b7b7b';
  const four = [[9, 17], [49, 57], [91, 99], [99, 107]];
  const pairs = (from, to) => range(from, to, 2).flatMap((b) => [[b + 0.17], [b + 0.6, 'wide']]);
  const ticks = (from, to, kind) => range(from, to, kind ? 1 : 0.5).map((b) => [b, kind]);
  const stabs = (from, to) => range(from, to - 1, 4).map((b) => {
    const len = Math.min(4, to - b);
    return [b, b + len, '', `marks="${100 / len} ${200 / len} ${len > 3 ? 75 : ''}"`];
  });

  const TRACKS = [
    { name: 'CH', type: 'wave', color: GREY, vol: 50, clips: [[1, 19, 'CH-bounce-3'], [41, 59, 'CH-bounce-2'], [83, 115.5, 'CH-bounce-1']] },
    { name: 'CH', type: 'wave', color: '#3ebb62', vol: 68, hits: [...pairs(9, 15), ...pairs(41, 55), ...pairs(83, 105)] },
    { name: 'CH', type: 'keys', color: '#8587ad', vol: 66, rec: 'ready', clips: four.map(([a, b], i) => [a, b, `CH #${i + 1}`]) },
    { name: 'CLAVE', type: 'wave', color: '#d92e24', vol: 70, hits: [12.85, 16.85, 52.85, 56.85, 94.85, 98.85, 102.85, 106.85].map((b) => [b]) },
    { name: 'HH', type: 'wave', color: '#9549cb', vol: 66, clips: four.map(([a, b]) => [a, b, 'Hi-Hat 16 Crsh']) },
    { name: 'RIDE', type: 'wave', color: '#009d47', vol: 74, clips: four.map(([a, b]) => [a, b - 1, 'Ride 20 A Cu']) },
    { name: 'small crash', type: 'wave', color: '#c69f70', vol: 60, hits: [...ticks(9.2, 15.2, 'box'), [12.1, 'box'], ...ticks(41, 56, 'box'), [52.85, 'box'], ...ticks(83, 98, 'box'), [86.85, 'box'], [94.85, 'box'], [98.25, 'box'], ...ticks(99.2, 105.2, 'box'), [102.05, 'box']] },
    { name: 'STAB LD', type: 'wave', color: GREY, vol: 46, clips: [[16, 17], [17, 107, 'STAB LD-bounce-1']] },
    { name: 'MicroSaw', type: 'wave', color: GREY, vol: 50, clips: [[83, 103, 'MicroSaw-bounce-1']] },
    { name: '2nd Drop FX', type: 'wave', color: GREY, vol: 50, clips: [[75, 87, '2nd Drop FX-bounce-1']] },
    { name: 'CLAP', type: 'wave', color: '#d92e24', vol: 54, hits: [...ticks(9.2, 31.7), ...ticks(33.2, 56.7), ...ticks(59.2, 73.7), ...ticks(75.2, 106.7)] },
    { name: 'SHAKE', type: 'wave', color: '#0099d9', vol: 72, clips: [[9, 17, 'WA Afro-Latin', 'muted marks="50"'], [91, 99, 'WA Afro-Latin', 'marks="50"'], [99, 107, 'WA Afro-Latin', 'muted marks="50"']] },
    { name: 'LAYERED CLAP', type: 'keys', color: '#3ebb62', vol: 68, rec: 'ready', clips: [[9, 17, 'LAYERED CLAP', 'muted'], [67, 74, 'LAYERED CLAP'], [75, 83, 'LAYERED CLAP'], [83, 90.6, 'LAYERED CLAP'], [90.6, 90.8], [90.8, 91], [91, 99, 'LAYERED CLAP'], [99, 107, 'LAYERED CLAP', 'muted']] },
    { name: 'PAD', type: 'wave', color: GREY, vol: 50, clips: [[17, 41, 'Xenia-bounce-1'], [59, 83, 'Xenia-bounce-1']] },
    { name: 'vc stab', type: 'keys', color: '#e16691', vol: 60, rec: 'ready', clips: [...stabs(17, 32), ...stabs(41, 57), ...stabs(59, 74), ...stabs(83, 107)] },
    { name: 'CRASH FILL', type: 'wave', color: '#c9c9c9', vol: 64, clips: [16, 40, 48, 56, 82, 90, 98, 106].map((b) => [b, b + 1, '', 'stripes']) },
    { name: 'SAW FX', type: 'keys', color: '#5761c6', vol: 62, rec: 'ready', clips: [[33, 37], [75, 79]] },
    { name: 'HOOVA', type: 'wave', color: GREY, vol: 50, clips: [[49, 63, 'HOOVA-bounce-2'], [91, 105, 'HOOVA-bounce-1']] },
    { name: 'RISER', type: 'keys', color: '#848ae0', vol: 64, rec: 'ready', clips: [[49, 57, 'RISER #1'], [91, 99, 'RISER #2']] },
    { name: 'BOOM', type: 'keys', color: '#5761c6', vol: 50, rec: 'ready', clips: [[57, 59]] },
    { name: 'LoopRiser', type: 'keys', color: '#ff833e', vol: 68, rec: 'armed', clips: [[91, 107, 'LoopRiser #1']] }
  ];
  const LOW = {
    folder: { color: RED, clips: [[1, 17, '', 'folder="half"'], [33, 57, '', 'folder="full"'], [75, 115, '', 'folder="short"']] },
    kick: { color: RED, clips: [[1, 17, 'KICK (LOW)-bounce-2'], [33, 57, 'KICK (LOW)-bounce-1'], [75, 115, 'KICK (LOW)-bounce-3']] },
    bass: { color: RED, clips: [[33, 57, 'BASS (LOW)-bounce-1'], [75, 99, 'BASS (LOW)-bounce-2']] }
  };
  const OUTPUTS = [{}, { clips: [[1, SONG_END, 'Master #1', 'master']] }];

  class TimelineView extends DawElement {
    styles() {
      return `
        :host { display: flex; flex-direction: column; position: relative; overflow: hidden; background: #787878; isolation: isolate; }
        .empty { flex: 1; }
        .grid { position: absolute; z-index: 1; top: 81px; bottom: 0; left: 0; right: 0; pointer-events: none; }
        .grid i { position: absolute; top: 0; bottom: 0; width: 1px; background: rgba(0, 0, 0, .28); }
        .grid i.strong { background: rgba(0, 0, 0, .68); }
        .shade { position: absolute; top: 0; bottom: 0; background: rgba(0, 0, 0, .07); }
        .playhead { position: absolute; z-index: 5; top: 0; bottom: 0; width: 1px; background: #e4e4e4; }
        .fade { position: absolute; z-index: 4; top: 0; bottom: 0; right: 0; width: 30px; background: linear-gradient(90deg, transparent, rgba(0, 0, 0, .4)); }
      `;
    }

    template() {
      const lines = [...range(-1, 57, 2), ...range(59, 123, 2)].map((b) => {
        const strong = b > 0 && (b < 59 ? (b - 1) % 8 === 0 : (b - 59) % 8 === 0);
        return `<i class="${strong ? 'strong' : ''}" style="left: ${at(b)}"></i>`;
      });
      return `
        <time-ruler></time-ruler>
        <div class="lanes"></div>
        <div class="empty"></div>
        <div class="outputs"></div>
        <div class="grid">
          <div class="shade" style="left: 0; width: ${at(1)}"></div>
          <div class="shade" style="left: ${at(SONG_END)}; right: 0"></div>
          ${lines.join('')}
        </div>
        <div class="fade"></div>
        <div class="playhead" style="left: ${at(44.95)}"></div>
      `;
    }

    connectedCallback() {
      super.connectedCallback();
      const lanes = this.shadowRoot.querySelector('.lanes');
      const lane = (track, dark) => {
        const el = document.createElement('arranger-lane');
        el.track = track;
        el.toggleAttribute('dark', Boolean(dark));
        return el;
      };
      lanes.append(
        lane(LOW.folder),
        document.createElement('automation-lane'),
        lane(LOW.kick, true),
        lane(LOW.bass, true),
        ...TRACKS.map((t) => lane(t))
      );
      this.shadowRoot.querySelector('.outputs').append(...OUTPUTS.map((t) => lane(t)));
    }
  }

  class ArrangerView extends DawElement {
    styles() {
      return `
        :host { display: flex; flex-direction: column; flex: 1; min-width: 0; box-sizing: border-box; border: 4px solid #7a7a7a; border-radius: 7px; background: #414141; overflow: hidden; }
        .main { flex: 1; min-height: 0; display: grid; grid-template-columns: 386px 1fr; grid-template-rows: minmax(0, 1fr); }
        .tracks { display: flex; flex-direction: column; border-right: 1px solid #222; background: #0c0c0c; }
        .modes { display: grid; grid-template-columns: 61px 56px 55px 113px 38px 62px; height: 81px; box-sizing: border-box; border-bottom: 1px solid #0c0c0c; background: #414141; }
        button { display: flex; align-items: center; justify-content: center; border: 0; padding: 0; background: none; color: inherit; font: inherit; }
        .modes button { gap: 10px; border-right: 1px solid #303030; background: #525252; color: #fff; }
        .modes .on { background: #2d2d2d; color: var(--orange); border: 0; border-radius: 0; }
        .modes .off { color: #707070; border-left: 1px solid #303030; }
        .modes .pointer { padding-left: 18px; }
        .modes .dim { color: #aaa; }
        .add { margin: 8px auto; color: #999; }
        .fill { flex: 1; }
        .foot { display: grid; grid-template-columns: 386px 1fr; height: 32px; color: #ccc; }
        .left, .right { display: flex; align-items: center; }
        .left { gap: 3px; padding-left: 3px; }
        .left button { width: 26px; height: 25px; }
        .on { color: var(--orange); background: #343434; border-radius: 5px; }
        .right { padding-left: 5px; }
        .track { flex: 1; margin: 0 6px 0 11px; }
        .thumb { width: 61%; height: 17px; border-radius: 5px; background: linear-gradient(#7e7e7e, #6c6c6c); }
        .right .on { height: 25px; }
        .link { width: 30px; margin-left: 11px; }
        .zoom { gap: 9px; margin-left: 84px; }
        .snap { width: 25px; margin-left: 10px; }
        .step { margin: 0 8px 0 10px; }
        .arrow { color: #999; }
      `;
    }

    template() {
      const header = (t) => `<track-header name="${t.name}" type="${t.type}" vol="${t.vol}" color="${t.color}" rec="${t.rec || 'idle'}"></track-header>`;
      return `
        <div class="main">
          <div class="tracks">
            <div class="modes">
              <button aria-label="Track display">${icon('outline', 27, 19)}</button>
              <button aria-label="Clip launcher">${icon('grid', 18, 14)}</button>
              <button class="on" aria-label="Arranger timeline">${icon('rows', 18, 14)}</button>
              <span></span>
              <button class="off" aria-label="Lanes">${icon('lanes', 19, 20)}</button>
              <button class="pointer" aria-label="Pointer tool">${icon('cursor', 15, 24)}<span class="dim">${icon('down', 8, 5)}</span></button>
            </div>
            <track-group>
              <track-header name="LOW" type="folder" vol="20" lit></track-header>
              <automation-header></automation-header>
              <track-header name="KICK (LOW)" type="wave" vol="50" color="${RED}"></track-header>
              <track-header name="BASS (LOW)" type="wave" vol="50" color="${RED}"></track-header>
            </track-group>
            ${TRACKS.map(header).join('')}
            <button class="add" aria-label="Add track">${icon('plus', 14, 14)}</button>
            <div class="fill"></div>
            <track-header name="CONTROL ROOM" type="bend" vol="24" color="#ff5706"></track-header>
            <track-header name="Master" type="crown" vol="24" color="#7a7a7a" main></track-header>
          </div>
          <timeline-view></timeline-view>
        </div>
        <div class="foot">
          <div class="left">
            <button aria-label="Show inputs and outputs">${icon('io', 16, 15)}</button>
            <button aria-label="Show track list">${icon('rowset', 17, 13)}</button>
            <button class="on" aria-label="Show effect tracks">${icon('bend', 14, 15)}</button>
            <button aria-label="Show crossfader">${icon('close', 14, 14)}</button>
          </div>
          <div class="right">
            <button class="arrow" aria-label="Scroll left">${icon('left', 10, 12)}</button>
            <div class="track"><div class="thumb"></div></div>
            <button class="arrow" aria-label="Scroll right">${icon('right', 10, 12)}</button>
            <button class="on link" aria-label="Automation follows clips">${icon('linked', 20, 20)}</button>
            <button class="zoom">2/1 ${icon('up', 8, 5)}</button>
            <button class="on snap" aria-label="Snap">${icon('snap', 18, 17)}</button>
            <button class="step" aria-label="Follow playback">${icon('step', 14, 18)}</button>
          </div>
        </div>
      `;
    }
  }

  class StatusBar extends DawElement {
    styles() {
      return `
        :host { display: flex; align-items: center; height: 52px; color: #c8c8c8; }
        button { display: flex; border: 0; padding: 0; background: none; color: inherit; font: inherit; }
        .info { width: 12px; justify-content: center; margin: 0 23px 0 28px; color: var(--orange); font: 700 22px/24px "Liberation Mono", monospace; }
        hr { width: 2px; height: 30px; margin: 0; border: 0; background: #808080; }
        nav { display: flex; gap: 20px; margin: 0 22px 0 23px; }
        nav .on { color: var(--orange); }
        .views { display: flex; align-items: center; gap: 25px; margin: 0 40px 0 21px; }
        dl { display: flex; gap: 26px; margin: 0; font-size: 16px; }
        dl div { display: flex; gap: 11px; }
        dt { color: #c8c8c8; }
        dd { margin: 0; color: #8f8f8f; font-size: 17px; }
        .tools { display: flex; align-items: center; gap: 26px; margin-left: auto; padding-right: 23px; }
        .tools hr { margin: 0 -4px; }
      `;
    }

    template() {
      return `
        <button class="info">i</button>
        <hr>
        <nav><button class="on">ARRANGE</button><button>MIX</button><button>EDIT</button></nav>
        <hr>
        <div class="views">
          <button aria-label="Detail editor">${icon('notes', 18, 18)}</button>
          <button aria-label="Automation editor">${icon('automation', 20, 20)}</button>
          <button aria-label="Device panel">${icon('panel', 23, 22)}</button>
          <button aria-label="Mixer panel">${icon('mixer', 22, 20)}</button>
        </div>
        <dl>
          <div><dt>DRAG</dt><dd>Select time</dd></div>
          <div><dt>ALT+DRAG</dt><dd>Rectangular selection</dd></div>
          <div><dt>DOUBLE-CLICK</dt><dd>Insert clip</dd></div>
        </dl>
        <div class="tools">
          <button aria-label="Browser">${icon('search', 20, 20)}</button>
          <button aria-label="Project">${icon('page', 18, 20)}</button>
          <button aria-label="Studio I/O">${icon('speaker', 20, 24)}</button>
          <button aria-label="Mappings">${icon('hand', 20, 20)}</button>
          <hr>
          <button aria-label="On-screen keyboard">${icon('keys', 20, 20)}</button>
        </div>
      `;
    }
  }

  class DawApp extends DawElement {
    styles() {
      return `
        :host { display: flex; flex-direction: column; height: 100vh; }
        main { flex: 1; min-height: 0; display: flex; gap: 4px; margin: 4px 6px 0 8px; }
      `;
    }

    template() {
      return `
        <title-bar></title-bar>
        <transport-bar></transport-bar>
        <main><clip-inspector></clip-inspector><arranger-view></arranger-view></main>
        <status-bar></status-bar>
      `;
    }
  }

  customElements.define('daw-icon', DawIcon);
  customElements.define('title-bar', TitleBar);
  customElements.define('tool-group', ToolGroup);
  customElements.define('tool-button', ToolButton);
  customElements.define('transport-display', TransportDisplay);
  customElements.define('transport-bar', TransportBar);
  customElements.define('inspector-field', InspectorField);
  customElements.define('clip-inspector', ClipInspector);
  customElements.define('track-header', TrackHeader);
  customElements.define('automation-header', AutomationHeader);
  customElements.define('track-group', TrackGroup);
  customElements.define('time-ruler', TimeRuler);
  customElements.define('arranger-clip', ArrangerClip);
  customElements.define('arranger-lane', ArrangerLane);
  customElements.define('automation-lane', AutomationLane);
  customElements.define('timeline-view', TimelineView);
  customElements.define('arranger-view', ArrangerView);
  customElements.define('status-bar', StatusBar);
  customElements.define('daw-app', DawApp);
</script>
</body>
</html>
